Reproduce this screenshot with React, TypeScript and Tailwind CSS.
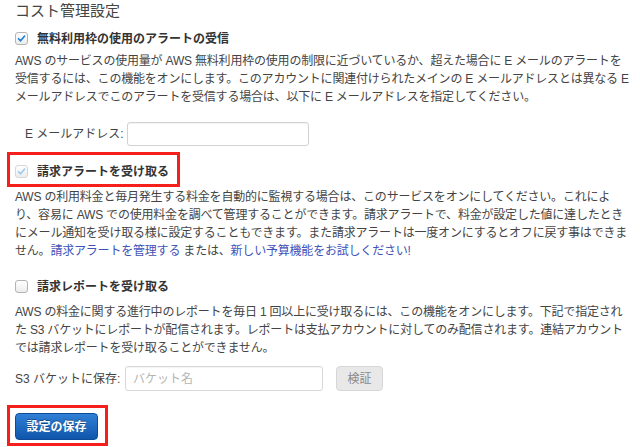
import React from 'react';

const Check = ({ color }: { color: string }) => (
  <svg width="13" height="13" viewBox="0 0 13 13" className="block">
    <path d="M3 6.8 L5.4 9.2 L10.2 3.6" fill="none" stroke={color} strokeWidth="2" strokeLinecap="round" strokeLinejoin="round" />
  </svg>
);

const CheckBox = ({ checked, faded }: { checked?: boolean; faded?: boolean }) => (
  <span
    className={`inline-flex h-[13px] w-[13px] shrink-0 items-center justify-center rounded-[3px] border bg-gradient-to-b from-white to-[#ececec] ${
      faded ? 'border-[#d6d6d6]' : 'border-[#b4b4b4]'
    }`}
  >
    {checked && <Check color={faded ? '#9ccbee' : '#1d7fd6'} />}
  </span>
);

const Line = ({ children }: { children: React.ReactNode }) => (
  <div className="h-[18px] whitespace-nowrap leading-[18px] tracking-[-0.2px]">{children}</div>
);

export default function App() {
  return (
    <div
      className="min-h-[447px] bg-white pl-[15px] text-[12px] text-[#444]"
      style={{ fontFamily: '"Liberation Sans", "Noto Sans CJK JP", sans-serif' }}
    >
      <h1 className="h-[22px] text-[15px] font-normal leading-[22px] text-[#444]">コスト管理設定</h1>

      {/* free tier alerts */}
      <label className="mt-[10px] flex h-[13px] items-center gap-[9px]">
        <CheckBox checked />
        <span className="font-bold text-[#333]">無料利用枠の使用のアラートの受信</span>
      </label>
      <div className="mt-[7px]">
        <Line>AWS のサービスの使用量が AWS 無料利用枠の使用の制限に近づいているか、超えた場合に E メールのアラートを</Line>
        <Line>受信するには、この機能をオンにします。このアカウントに関連付けられたメインの E メールアドレスとは異なる E</Line>
        <Line>メールアドレスでこのアラートを受信する場合は、以下に E メールアドレスを指定してください。</Line>
      </div>
      <div className="mt-[16px] flex items-center">
        <span className="ml-[10px] w-[102px]">E メールアドレス:</span>
        <input className="h-[24px] w-[182px] rounded-[3px] border border-[#d2d2d2] bg-white px-2 shadow-[inset_0_1px_1px_rgba(0,0,0,0.05)] outline-none" />
      </div>

      {/* billing alerts */}
      <div className="-ml-[8px] mt-[6px] w-[173px] border-[3px] border-[#f5201b] pb-[6px] pl-[5px] pt-[10px]">
        <label className="flex h-[13px] items-center gap-[9px]">
          <CheckBox checked faded />
          <span className="font-bold text-[#333]">請求アラートを受け取る</span>
        </label>
      </div>
      <div className="mt-[1px]">
        <Line>AWS の利用料金と毎月発生する料金を自動的に監視する場合は、このサービスをオンにしてください。これによ</Line>
        <Line>り、容易に AWS での使用料金を調べて管理することができます。請求アラートで、料金が設定した値に達したとき</Line>
        <Line>にメール通知を受け取る様に設定することもできます。また請求アラートは一度オンにするとオフに戻す事はできま</Line>
        <Line>
          せん。<a className="text-[#3f52b8]">請求アラートを管理する</a> または、
          <a className="text-[#3f52b8]">新しい予算機能をお試しください!</a>
        </Line>
      </div>

      {/* billing reports */}
      <label className="mt-[20px] flex h-[13px] items-center gap-[9px]">
        <CheckBox />
        <span className="font-bold text-[#333]">請求レポートを受け取る</span>
      </label>
      <div className="mt-[10px]">
        <Line>AWS の料金に関する進行中のレポートを毎日 1 回以上に受け取るには、この機能をオンにします。下記で指定され</Line>
        <Line>た S3 バケットにレポートが配信されます。レポートは支払アカウントに対してのみ配信されます。連結アカウント</Line>
        <Line>では請求レポートを受け取ることができません。</Line>
      </div>
      <div className="mt-[9px] flex items-center">
        <span className="w-[110px]">S3 バケットに保存:</span>
        <input
          placeholder="バケット名"
          className="h-[25px] w-[198px] rounded-[3px] border border-[#d8d8d8] bg-white pl-[7px] text-[12px] shadow-[inset_0_1px_1px_rgba(0,0,0,0.05)] outline-none placeholder:text-[#b4b4b4]"
        />
        <button className="ml-[13px] h-[25px] w-[47px] rounded-[4px] border border-[#d6d6d6] bg-[#e8e8e8] text-[12px] text-[#8a8a8a]">
          検証
        </button>
      </div>

      <div className="-ml-[8px] mt-[14px] w-[101px] border-[3px] border-[#f5201b] pb-[3px] pl-[5px] pt-[5px]">
        <button className="h-[27px] w-[83px] rounded-[4px] border border-[#0c4b98] bg-gradient-to-b from-[#2f80d6] to-[#0f56ab] text-[12px] font-bold text-white [text-shadow:0_-1px_0_rgba(0,0,0,0.35)]">
          設定の保存
        </button>
      </div>
    </div>
  );
}
